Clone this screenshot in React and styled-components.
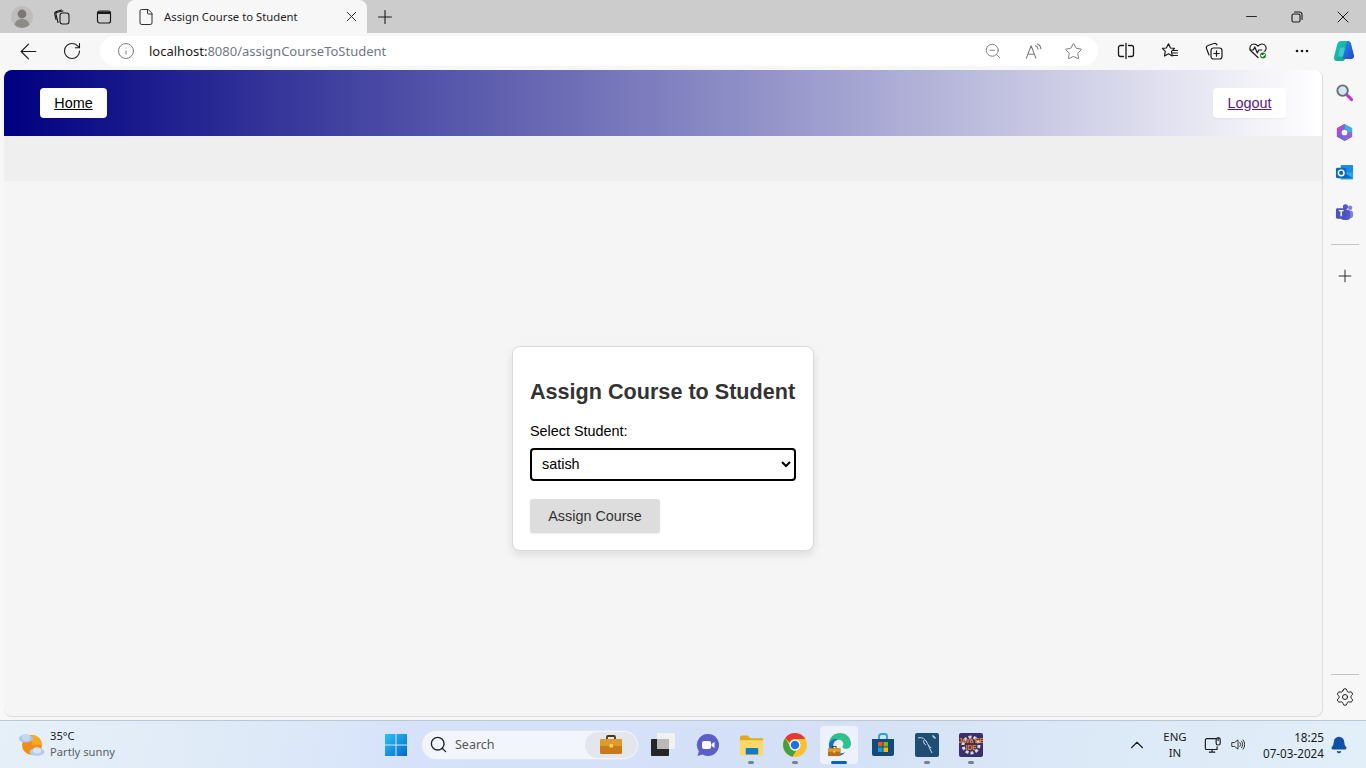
import React from "react";
import styled, { createGlobalStyle } from "styled-components";
import { ArrowLeft, RotateCw, Info, ZoomOut, Star, X, Plus, Minus, Settings, Search, File, ChevronUp, Bell } from "lucide-react";

const Global = createGlobalStyle`
  html, body { margin: 0; padding: 0; height: 100%; overflow: hidden; }
  #root { height: 100%; }
  * { box-sizing: border-box; }
`;

const UI = `"Noto Sans", "Open Sans", sans-serif`;
const WEB = `"Liberation Sans", Arial, sans-serif`;

const Screen = styled.div`width:1366px;height:768px;display:flex;flex-direction:column;background:#f7f7f7;overflow:hidden;`;

/* Tab strip */
const TabStrip = styled.div`height:33px;background:#cccccc;display:flex;align-items:stretch;flex:none;`;
const StripLeft = styled.div`width:127px;display:flex;align-items:center;flex:none;`;
const Slot = styled.div`width:${p => p.$w}px;height:100%;display:flex;align-items:center;justify-content:center;flex:none;color:${p => p.$c || "#1a1a1a"};`;
const Tab = styled.div`width:240px;flex:none;background:#f7f7f7;border-radius:8px 8px 0 0;display:flex;align-items:center;padding-left:10px;`;
const TabTitle = styled.span`font:11.3px ${UI};color:#1f1f1f;margin-left:9px;width:179px;white-space:nowrap;`;
const Spacer = styled.div`flex:1;`;

/* Toolbar */
const Toolbar = styled.div`height:37px;flex:none;background:#f7f7f7;display:flex;align-items:center;padding:0 0 1px 6px;`;
const ToolSlot = styled.div`width:${p => p.$w}px;height:30px;display:flex;align-items:center;justify-content:center;flex:none;color:${p => p.$c || "#1a1a1a"};`;
const Address = styled.div`width:998px;height:30px;margin:0 6px;background:#fff;border-radius:15px;display:flex;align-items:center;flex:none;padding:0 5px 0 6px;`;
const Url = styled.div`flex:1;font:13px ${UI};color:#6f7882;margin-left:3px;white-space:nowrap;b{font-weight:400;color:#1a1a1a;}`;

/* Middle */
const Middle = styled.div`flex:1;display:flex;min-height:0;padding-left:4px;`;
const Page = styled.div`width:1319px;height:647px;background:#f5f5f5;border-radius:8px;border-right:1px solid #dcdcdc;border-bottom:1px solid #dcdcdc;overflow:hidden;display:flex;flex-direction:column;font-family:${WEB};`;
const NavBar = styled.nav`height:66px;flex:none;background:linear-gradient(to right,#000080,#ffffff);display:flex;align-items:center;justify-content:space-between;padding:0 36px;`;
const NavLink = styled.a`display:block;height:30px;line-height:30px;width:${p => p.$w}px;text-align:center;background:#fff;border-radius:4px;font-size:14.4px;text-decoration:underline;color:${p => p.$visited ? "#551a8b" : "#000"};box-shadow:0 1px 2px rgba(0,0,0,.05);`;
const Strip = styled.div`height:45px;flex:none;background:#efefef;`;
const Main = styled.main`flex:1;display:flex;align-items:center;justify-content:center;`;
const Card = styled.form`width:302px;height:205px;background:#fff;border:1px solid #dadada;border-radius:8px;box-shadow:0 4px 8px rgba(0,0,0,.1);padding:31px 17px 17px;display:flex;flex-direction:column;`;
const Title = styled.h2`margin:0;font:bold 21.6px/28px ${WEB};color:#333;white-space:nowrap;`;
const Label = styled.label`margin-top:17px;font:14.4px/16px ${WEB};color:#000;`;
const Select = styled.select`margin-top:9px;width:100%;height:33px;border:2px solid #000;border-radius:4px;background:#fff;font:14.4px ${WEB};color:#000;padding:0 6px 1px;outline:none;`;
const Submit = styled.button`margin-top:18px;align-self:flex-start;width:130px;height:34px;border:none;border-radius:3px;background:#dddddd;color:#333;font:14.4px ${WEB};box-shadow:0 1px 2px rgba(0,0,0,.08);`;

/* Sidebar */
const Side = styled.aside`flex:1;display:flex;flex-direction:column;align-items:center;height:650px;padding:2px 0 3px;`;
const SideBtn = styled.div`height:40px;width:100%;display:flex;align-items:center;justify-content:center;flex:none;color:#1a1a1a;`;
const SideRule = styled.div`width:28px;height:1px;background:#c4c4c4;flex:none;margin:${p => p.$m};`;

/* Taskbar */
const Taskbar = styled.footer`height:48px;flex:none;border-top:1px solid #bcc7d6;background:linear-gradient(100deg,#e6f0f8 0%,#dfeaf8 18%,#d6e2fa 30%,#d4e0f6 60%,#dce9f7 80%,#e2eef8 100%);display:flex;align-items:center;`;
const Weather = styled.div`width:374px;flex:none;display:flex;align-items:center;padding-left:17px;gap:5px;`;
const WeatherText = styled.div`display:flex;flex-direction:column;margin-top:-1px;font:11.2px/16px ${UI};color:#1a1a1a;span+span{color:#5a5f66;}`;
const SearchBox = styled.div`width:218px;height:30px;margin:0 2px 0 3px;flex:none;background:#f2f6fc;border:1px solid #dfe6f0;border-radius:15px;display:flex;align-items:center;padding-left:7px;position:relative;font:12.5px ${UI};color:#555;gap:7px;`;
const SearchThumb = styled.div`position:absolute;right:1px;top:1px;width:52px;height:26px;border-radius:13px;background:#e3e6ea;display:flex;align-items:center;justify-content:center;`;
const TaskIcon = styled.div`width:38px;height:38px;margin:0 3px;flex:none;display:flex;align-items:center;justify-content:center;position:relative;border-radius:4px;
  background:${p => p.$active ? "rgba(255,255,255,.55)" : "transparent"};
  &::after{content:"";display:${p => p.$dot ? "block" : "none"};position:absolute;bottom:0;left:50%;transform:translateX(-50%);height:3px;border-radius:2px;width:${p => p.$active ? 16 : 6}px;background:${p => p.$active ? "#0067c0" : "#7b8087"};}`;
const Tray = styled.div`flex:1;display:flex;align-items:center;padding-left:133px;height:100%;color:#1a1a1a;`;
const Lang = styled.div`width:38px;margin:0 1px 0 0;text-align:center;font:11.4px/16px ${UI};color:#1a1a1a;`;
const Clock = styled.div`width:74px;margin-left:5px;text-align:right;font:11.7px/16px ${UI};color:#1a1a1a;`;

const Svg = ({ s = 16, v = 24, children, ...r }) => <svg width={s} height={s} viewBox={`0 0 ${v} ${v}`} fill="none" stroke="currentColor" strokeWidth="1.5" strokeLinecap="round" strokeLinejoin="round" {...r}>{children}</svg>;

const Avatar = () => <svg width="22" height="22" viewBox="0 0 22 22"><circle cx="11" cy="11" r="11" fill="#bdbdbb"/><circle cx="11" cy="8" r="4.400" fill="#7b7774"/><path d="M3.500 19c1-4.500 4-6 7.500-6s6.500 1.500 7.500 6a11 11 0 0 1-15 0z" fill="#8f8b87"/></svg>;
const Collections = () => <Svg s={18} v={18} strokeWidth="1.100"><rect x="7" y="5" width="9" height="11" rx="2.500"/><path d="M5 14.500 3 6.500C2.700 5.300 3.300 4.500 4.300 4.300L10 3"/><path d="M3 11.500 1.800 6.500C1.500 5 2 4 3.300 3.600L8.500 2"/></Svg>;
const VTabs = () => <Svg s={16} v={16} strokeWidth="1.200"><rect x="1.500" y="2" width="13" height="12" rx="2"/><path d="M2 2.500h12V5H2z" fill="currentColor" stroke="none"/></Svg>;
const Restore = () => <Svg s={12} v={12} strokeWidth="1.100"><rect x="1" y="3" width="8" height="8" rx="1.500"/><path d="M3.500 1h5A2.500 2.500 0 0 1 11 3.500v5"/></Svg>;
const ReadAloud = () => <Svg s={19} v={20} strokeWidth="1.100"><path d="M2.500 17 7.500 4l5 13M4.200 13h6.600"/><path d="M12 4c1.500.5 2.500 1.800 2.800 3.500M14 2c2.300.8 3.600 2.800 3.800 5.200"/></Svg>;
const Split = () => <Svg s={18} v={18} strokeWidth="1.300"><path d="M9 1.500v15"/><path d="M6.500 3.500H3.500a2 2 0 0 0-2 2v7a2 2 0 0 0 2 2h3M11.500 3.500h3a2 2 0 0 1 2 2v7a2 2 0 0 1-2 2h-3"/></Svg>;
const FavList = () => <Svg s={18} v={18} strokeWidth="1.200"><path d="M7.500 1.800 9.500 6l4 .4-3 3 .8 4.600-3.800-2.200L3.500 14l.8-4.600-3-3 4-.4z"/><path d="M12 8.500h4.500M11.500 11h5M11.500 13.500h5"/></Svg>;
const CollAdd = () => <Svg s={18} v={18} strokeWidth="1.200"><rect x="6" y="6" width="11" height="11" rx="2.500"/><path d="M11.500 8.800v5.400M8.800 11.500h5.400"/><path d="M4 13 1.500 6.500C1 5 1.500 4 3 3.500L9 1.500c1.300-.4 2.400 0 3 1.500"/></Svg>;
const Health = () => <svg width="20" height="20" viewBox="0 0 20 20" fill="none" stroke="#1a1a1a" strokeWidth="1.200" strokeLinejoin="round" strokeLinecap="round"><path d="M10 16.500 3 10C.5 7 2.500 3 5.800 3c1.800 0 3.200 1 4.200 2.200C11 4 12.400 3 14.200 3 17.500 3 19.500 7 17 10l-1.500 1.500"/><path d="M1.800 9h3.500l1.500-3 2.500 6 1.500-3h3"/><circle cx="15" cy="14.500" r="3.500" fill="#107c10" stroke="#f7f7f7"/><path d="m13.500 14.500 1 1 2-2" stroke="#fff"/></svg>;
const Dots = () => <svg width="14" height="4" viewBox="0 0 14 4" fill="#1a1a1a"><circle cx="2" cy="2" r="1.300"/><circle cx="7" cy="2" r="1.300"/><circle cx="12" cy="2" r="1.300"/></svg>;
const Copilot = () => <svg width="24" height="24" viewBox="0 0 24 24"><defs><linearGradient id="cpa" x1="0" y1="0" x2="1" y2="1"><stop offset="0" stopColor="#19c3c9"/><stop offset="1" stopColor="#1aa37a"/></linearGradient><linearGradient id="cpb" x1="0" y1="0" x2="1" y2="1"><stop offset="0" stopColor="#2a8ef0"/><stop offset="1" stopColor="#1c47c9"/></linearGradient></defs><path d="M9 2h6c1.500 0 2 1 2.500 2L13 20c-.5 1.500-1.500 2-3 2H5c-2.500 0-3.500-2-3-4l3-12C5.600 3.500 7 2 9 2z" fill="url(#cpa)"/><path d="M15 2h1c1.500 0 2.500 1 3 2.500l3 12c.4 2-1 3.500-3 3.500h-7c-1 0-1.500-.5-1-2L15 2z" fill="url(#cpb)"/><path d="M8 9c2-1 4-1 5 0l-2 8c-1.500 1-4 1-5 0z" fill="#53d6e0" opacity=".65"/></svg>;
const Magnifier = () => <svg width="19" height="19" viewBox="0 0 20 20" fill="none"><path d="m12.500 12.500 5 5" stroke="#c22ee0" strokeWidth="3" strokeLinecap="round"/><circle cx="8" cy="8" r="5.500" fill="#cfe8f5" stroke="#6d6d6d" strokeWidth="2"/></svg>;
const M365 = () => <svg width="19" height="19" viewBox="0 0 20 20" fill="none"><path d="M10 1 2 5.500v9L10 19l8-4.500v-9z" fill="#5a6fd8"/><path d="M10 1 18 5.500V10H13.500A4 4 0 0 0 10 6z" fill="#38b2e0"/><path d="M2 5.500 10 1v5a4 4 0 0 0-3.500 6L2 14.500z" fill="#b24fc7"/><path d="M18 10v4.500L10 19l-3.500-7A4 4 0 0 0 13.500 10z" fill="#9b5cd6"/><circle cx="10" cy="10" r="3" fill="#f7f7f7"/></svg>;
const Outlook = () => <svg width="19" height="19" viewBox="0 0 20 20"><rect x="6" y="2" width="13" height="15" rx="1" fill="#1490df"/><path d="M6 10h13v6a1 1 0 0 1-1 1H6z" fill="#28a8ea"/><path d="m9 10 10 6H8z" fill="#0a6cbd"/><rect x="1" y="5" width="11" height="11" rx="1.500" fill="#0f6cbd"/><circle cx="6.500" cy="10.500" r="3" fill="none" stroke="#fff" strokeWidth="1.500"/></svg>;
const Teams = () => <svg width="19" height="19" viewBox="0 0 20 20"><circle cx="16" cy="5" r="2.300" fill="#7b83eb"/><rect x="12" y="8" width="7" height="8" rx="3" fill="#7b83eb"/><circle cx="11" cy="4" r="2.700" fill="#5059c9"/><rect x="6" y="7" width="10" height="11" rx="3.500" fill="#5059c9"/><rect x="1" y="5.500" width="11" height="11" rx="1.500" fill="#4b53bc"/><path d="M4 8h5M6.500 8v6" stroke="#fff" strokeWidth="1.500" fill="none"/></svg>;

const WeatherIcon = () => <svg width="28" height="28" viewBox="0 0 28 28"><circle cx="15" cy="14" r="10" fill="#f28c13"/><path d="M15 4a10 10 0 0 1 10 10H15z" fill="#f9a825"/><ellipse cx="9" cy="7.500" rx="7" ry="4" fill="#a9c7ec"/><ellipse cx="9" cy="6.500" rx="4" ry="3.500" fill="#c3d9f2"/><ellipse cx="20" cy="21" rx="7.500" ry="3.800" fill="#b4cdef"/><ellipse cx="20" cy="19.500" rx="4" ry="3.300" fill="#d5e3f6"/></svg>;
const Win = () => <svg width="24" height="24" viewBox="0 0 24 24"><defs><linearGradient id="wg" x1="0" y1="0" x2="1" y2="1"><stop offset="0" stopColor="#2bc3f5"/><stop offset="1" stopColor="#0668c9"/></linearGradient></defs><path d="M1 1h10.500v10.500H1zM12.500 1H23v10.500H12.500zM1 12.500h10.500V23H1zM12.500 12.500H23V23H12.500z" fill="url(#wg)"/></svg>;
const Briefcase = () => <svg width="24" height="22" viewBox="0 0 24 22"><path d="M8 5V3a1 1 0 0 1 1-1h6a1 1 0 0 1 1 1v2" fill="none" stroke="#4a3620" strokeWidth="1.800"/><rect x="1" y="5" width="22" height="15" rx="1.500" fill="#c9791a"/><rect x="1" y="5" width="22" height="7" rx="1.500" fill="#e09a2b"/><rect x="10.500" y="10" width="3.500" height="3.500" fill="#f5d547"/></svg>;
const TaskView = () => <svg width="24" height="24" viewBox="0 0 24 24"><rect x="6" y="0" width="18" height="16" rx="1" fill="#f0f1f3"/><rect x="0" y="6" width="18" height="17" rx="1" fill="#262626"/><rect x="6" y="6" width="12" height="10" fill="#b9b9b9"/></svg>;
const Chat = () => <svg width="24" height="24" viewBox="0 0 24 24"><path d="M13 1a11 11 0 1 1-5.500 20.500L2.500 23l1.300-4.800A11 11 0 0 1 13 1z" fill="#5b5fc7"/><rect x="7" y="8" width="9" height="8" rx="2" fill="#fff"/><path d="m16.500 11 3-2v6l-3-2z" fill="#fff"/></svg>;
const Folder = () => <svg width="25" height="24" viewBox="0 0 26 24"><path d="M1 4a2 2 0 0 1 2-2h6l3 3h12a1 1 0 0 1 1 1v3H1z" fill="#e0a91b"/><path d="M1 7h24v14a2 2 0 0 1-2 2H3a2 2 0 0 1-2-2z" fill="#fcd868"/><rect x="7" y="15" width="13" height="7" rx="1" fill="#1478c8"/></svg>;
const Chrome = () => <svg width="24" height="24" viewBox="0 0 24 24"><circle cx="12" cy="12" r="12" fill="#fbc02d"/><path d="M12 0a12 12 0 0 1 10.400 6H12a6 6 0 0 0-5.500 3.500L2.300 5A12 12 0 0 1 12 0z" fill="#e53935"/><path d="M2.300 5 7 13.500a6 6 0 0 0 6 4.400L9.500 23.700A12 12 0 0 1 2.300 5z" fill="#43a047"/><circle cx="12" cy="12" r="5.500" fill="#fff"/><circle cx="12" cy="12" r="4.300" fill="#1a73e8"/></svg>;
const Edge = () => <svg width="25" height="25" viewBox="0 0 26 26"><path d="M2 12C2.500 5 8 1 13.500 1 20 1 25 6 25 12.500c0 3-2 5-5 5-2.500 0-4-1-4-2.500 2-2 1-6.500-3.500-7C7.500 7.500 3.500 9 2 12z" fill="#2fc18b"/><path d="M2 12C3.500 8 8 6 12.500 8c-3.500 0-6 2.500-6 6 0 3 2 6 5 7.500 2 1 5 1 7.500-.5C16.500 24 13 25 10 24.500 5 23.500 1.500 18 2 12z" fill="#1172c9"/><path d="M1 17h13v8H1z" fill="#b96f17"/><path d="M1 17h13v3.500H1z" fill="#e09a2b"/><path d="M5.500 17v-2h4v2" stroke="#4a3620" fill="none"/><rect x="6.500" y="19.500" width="2" height="2" fill="#f5d547"/></svg>;
const Store = () => <svg width="24" height="24" viewBox="0 0 24 24"><path d="M8 6V3.500C8 2 9 1 10.500 1h3C15 1 16 2 16 3.500V6" fill="none" stroke="#26a0da" strokeWidth="1.800"/><path d="M1 6h22v15a2 2 0 0 1-2 2H3a2 2 0 0 1-2-2z" fill="#12497f"/><rect x="7" y="9" width="4.500" height="4.500" fill="#f25022"/><rect x="12.500" y="9" width="4.500" height="4.500" fill="#7fba00"/><rect x="7" y="14.500" width="4.500" height="4.500" fill="#00a4ef"/><rect x="12.500" y="14.500" width="4.500" height="4.500" fill="#ffb900"/></svg>;
const MySql = () => <svg width="24" height="24" viewBox="0 0 24 24"><rect width="24" height="24" rx="2" fill="#1f4e74"/><path d="M3 5c3-1 6 0 8 3s3 6 4 8l2 4M9 7c-1 2 0 4 2 5M13 12c1 1 2 1 3 3" fill="none" stroke="#cfdde8" strokeWidth="1"/><path d="m18 2 3 3-1 1-3-3z" fill="#cfdde8"/></svg>;
const Eclipse = () => <svg width="24" height="24" viewBox="0 0 24 24"><rect width="24" height="24" rx="2" fill="#3a2f6b"/><circle cx="12" cy="12" r="8" fill="none" stroke="#d8d8d8" strokeWidth="3" strokeDasharray="3 2"/><text x="12" y="10" textAnchor="middle" fontFamily="Liberation Sans" fontWeight="700" fontSize="6.500" fill="#f08a24">Java EE</text><text x="12" y="17" textAnchor="middle" fontFamily="Liberation Sans" fontWeight="700" fontSize="6.500" fill="#f08a24">IDE</text></svg>;
const Network = () => <Svg s={18} v={20} strokeWidth="1.300"><path d="M13 3H3a1.500 1.500 0 0 0-1.500 1.500v9A1.500 1.500 0 0 0 3 15h11.500V12"/><path d="M6 18h6M9 15v3"/><rect x="13.500" y="2" width="4.500" height="8" rx="2"/><path d="M15.700 2v3"/></Svg>;
const Speaker = () => <Svg s={17} v={18} strokeWidth="1.100"><path d="M1.500 6.500h3L9 3v12l-4.500-3.500h-3z"/><path d="M11.500 6.500a3.500 3.500 0 0 1 0 5M13.500 4.800a6 6 0 0 1 0 8.400M15.500 3a9 9 0 0 1 0 12"/></Svg>;

export default function App() {
  return (
    <Screen>
      <Global />
      <TabStrip>
        <StripLeft>
          <Slot $w={44}><Avatar /></Slot>
          <Slot $w={36}><Collections /></Slot>
          <Slot $w={47}><VTabs /></Slot>
        </StripLeft>
        <Tab>
          <File size={18} strokeWidth={1.200} color="#1a1a1a" />
          <TabTitle>Assign Course to Student</TabTitle>
          <X size={17} strokeWidth={1.300} color="#1a1a1a" />
        </Tab>
        <Slot $w={36}><Plus size={22} strokeWidth={1.200} /></Slot>
        <Spacer />
        <Slot $w={46}><Minus size={17} strokeWidth={1.300} /></Slot>
        <Slot $w={46}><Restore /></Slot>
        <Slot $w={46}><X size={20} strokeWidth={1.200} /></Slot>
      </TabStrip>
      <Toolbar>
        <ToolSlot $w={44}><ArrowLeft size={25} strokeWidth={1.100} /></ToolSlot>
        <ToolSlot $w={44}><RotateCw size={20} strokeWidth={1.300} /></ToolSlot>
        <Address>
          <ToolSlot $w={40} $c="#6b6b6b"><Info size={18} strokeWidth={1.200} /></ToolSlot>
          <Url><b>localhost:</b>8080/assignCourseToStudent</Url>
          <ToolSlot $w={40} $c="#777"><ZoomOut size={18} strokeWidth={1.200} /></ToolSlot>
          <ToolSlot $w={40} $c="#777"><ReadAloud /></ToolSlot>
          <ToolSlot $w={40} $c="#777"><Star size={19} strokeWidth={1.200} /></ToolSlot>
        </Address>
        <ToolSlot $w={44}><Split /></ToolSlot>
        <ToolSlot $w={44}><FavList /></ToolSlot>
        <ToolSlot $w={44}><CollAdd /></ToolSlot>
        <ToolSlot $w={44}><Health /></ToolSlot>
        <ToolSlot $w={44}><Dots /></ToolSlot>
        <ToolSlot $w={40}><Copilot /></ToolSlot>
      </Toolbar>
      <Middle>
        <Page>
          <NavBar>
            <NavLink href="#" $w={67}>Home</NavLink>
            <NavLink href="#" $w={73} $visited>Logout</NavLink>
          </NavBar>
          <Strip />
          <Main>
            <Card>
              <Title>Assign Course to Student</Title>
              <Label>Select Student:</Label>
              <Select defaultValue="satish"><option>satish</option></Select>
              <Submit type="button">Assign Course</Submit>
            </Card>
          </Main>
        </Page>
        <Side>
          <SideBtn><Magnifier /></SideBtn>
          <SideBtn><M365 /></SideBtn>
          <SideBtn><Outlook /></SideBtn>
          <SideBtn><Teams /></SideBtn>
          <SideRule $m="12px 0 11px" />
          <SideBtn><Plus size={20} strokeWidth={1.100} /></SideBtn>
          <SideRule $m="auto 0 2px" />
          <SideBtn><Settings size={20} strokeWidth={1.200} /></SideBtn>
        </Side>
      </Middle>
      <Taskbar>
        <Weather>
          <WeatherIcon />
          <WeatherText><span>35°C</span><span>Partly sunny</span></WeatherText>
        </Weather>
        <Slot $w={44}><Win /></Slot>
        <SearchBox>
          <Search size={19} strokeWidth={1.700} color="#222" />
          Search
          <SearchThumb><Briefcase /></SearchThumb>
        </SearchBox>
        <TaskIcon><TaskView /></TaskIcon>
        <TaskIcon><Chat /></TaskIcon>
        <TaskIcon $dot><Folder /></TaskIcon>
        <TaskIcon $dot><Chrome /></TaskIcon>
        <TaskIcon $dot $active><Edge /></TaskIcon>
        <TaskIcon><Store /></TaskIcon>
        <TaskIcon $dot><MySql /></TaskIcon>
        <TaskIcon $dot><Eclipse /></TaskIcon>
        <Tray>
          <ChevronUp size={22} strokeWidth={1.200} />
          <Slot $w={8} />
          <Lang>ENG<br />IN</Lang>
          <Slot $w={36}><Network /></Slot>
          <Slot $w={14}><Speaker /></Slot>
          <Clock>18:25<br />07-03-2024</Clock>
          <Slot $w={30} $c="#0f4fa8"><Bell size={18} fill="#0f4fa8" /></Slot>
        </Tray>
      </Taskbar>
    </Screen>
  );
}
